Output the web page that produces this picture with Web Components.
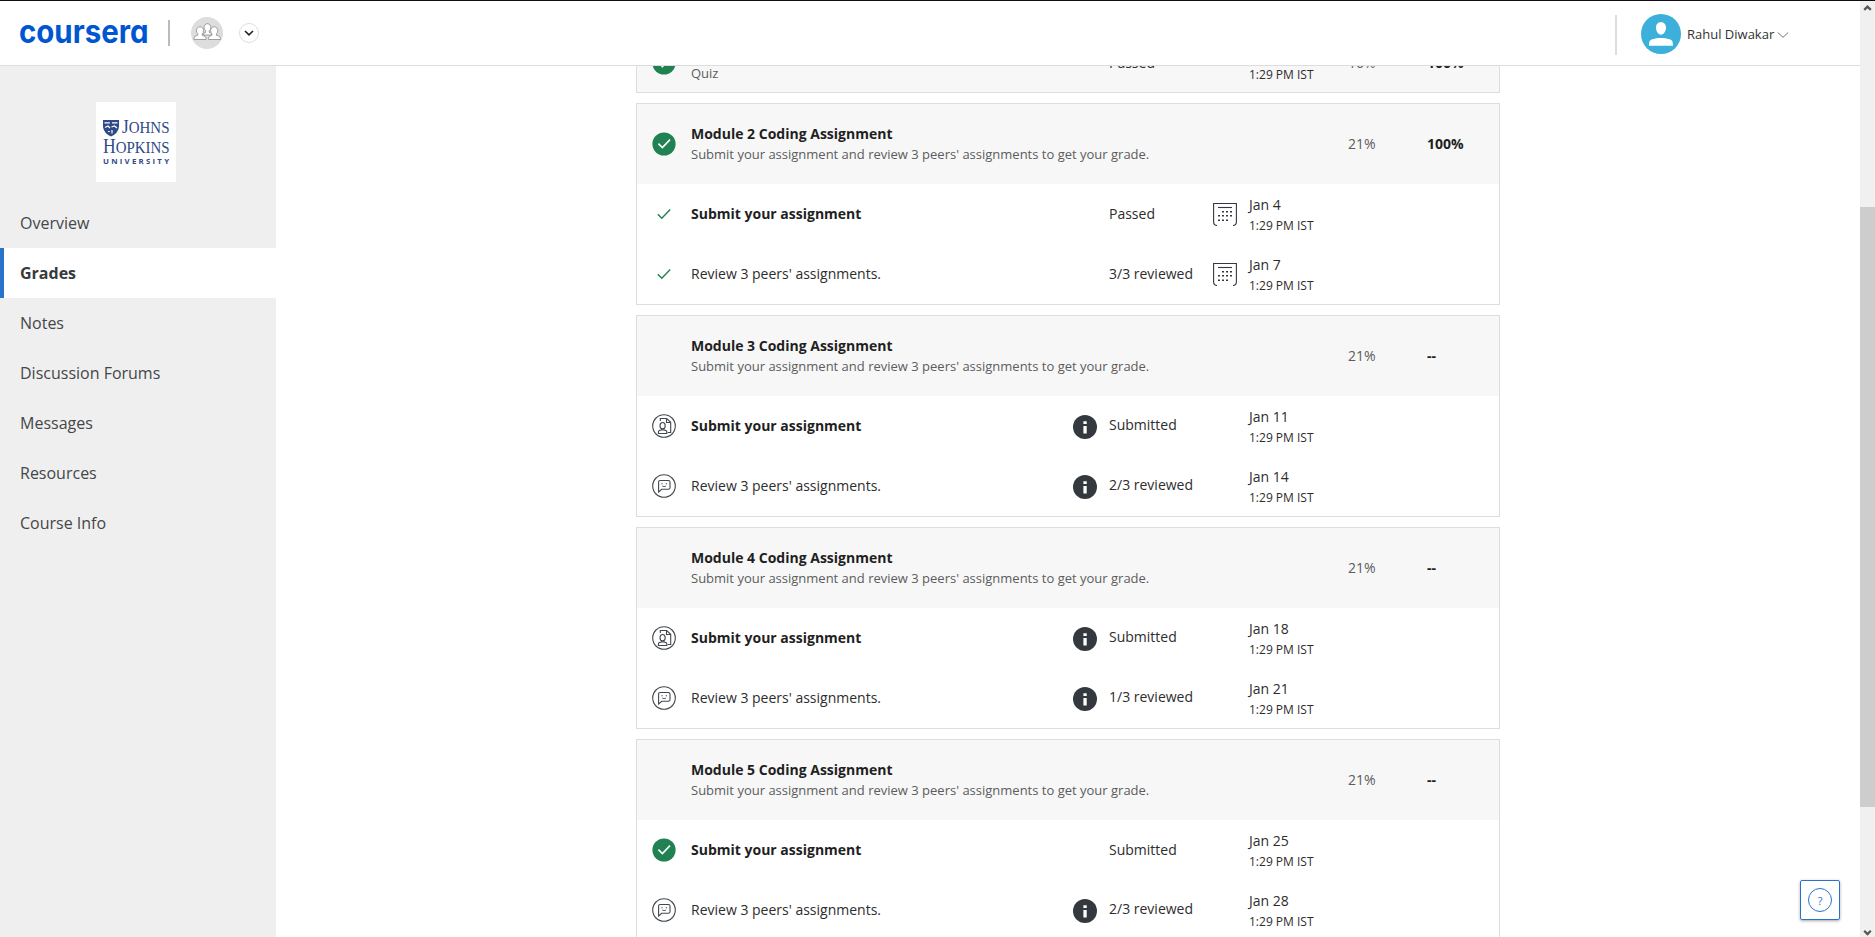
<!DOCTYPE html>
<html lang="en">
<head>
<meta charset="utf-8">
<title>Grades | Coursera</title>
<style>
html,body{margin:0;height:100%;overflow:hidden;background:#fff;font-family:"Open Sans",sans-serif;font-size:14px;color:#1f1f1f}
</style>
</head>
<body>
<course-app></course-app>
<script>
function define(name, css, html) {
  customElements.define(name, class extends HTMLElement {
    connectedCallback() {
      if (this.shadowRoot) return;
      const root = this.attachShadow({ mode: 'open' });
      const body = typeof html === 'function' ? html(this) : html;
      root.innerHTML = `<style>${css}</style>${body}`;
    }
  });
}

const ICONS = {
  done: `<circle cx="12" cy="12" r="11.6" fill="#208253"/><path d="M6.4 11.6l4 4 7.6-8" fill="none" stroke="#fff" stroke-width="1.6"/>`,
  check: `<path d="M5.800 12.200l4 4 8.400-8.800" fill="none" stroke="#208253" stroke-width="1.400"/>`,
  submit: `<g fill="none" stroke="#43484f" stroke-width="1.100"><circle cx="12" cy="12" r="11.300"/><path d="M8.300 7V4.500h6.400l4 3.800v10.200h-3M14.500 4.800v3.700h3.900"/><ellipse cx="10.600" cy="11.700" rx="2.600" ry="3.200"/><path d="M9.400 14.500v1.600M12 14.500v1.600M6.400 19.500v-1.600q0-1.700 3-1.900h2.400q3 .2 3 1.900v1.600z"/></g>`,
  review: `<g fill="none" stroke="#43484f" stroke-width="1.100"><circle cx="12" cy="12" r="11.300"/><path d="M6.600 18V8.100q0-1.600 1.600-1.600h8.200q1.600 0 1.600 1.600v5.600q0 1.600-1.600 1.600h-6.700z"/><path d="M10 9v1.400M14.300 9v1.400M10.300 12.100q1.900 1 3.700 0" stroke-width=".9"/></g>`,
  info: `<circle cx="12" cy="12" r="12" fill="#343940"/><path d="M10.400 6.300h3.300v2.600h-3.300zM10.400 10.900h3.300v7.500h-3.300z" fill="#fff"/>`,
  calendar: `<g fill="none" stroke="#343940" stroke-width="1.100"><path d="M4 23.500Q.6 23.300 .6 19.800V1.500h22.800v18.300q0 3.500-3.400 3.700"/><path d="M5 5.500h14"/></g><g fill="#343940"><path d="M9 9h2v1.600H9zM13 9h2v1.600h-2zM17 9h2v1.600h-2zM5 13h2v1.600H5zM9 13h2v1.600H9zM13 13h2v1.600h-2zM17 13h2v1.600h-2zM5 17.500h2v1.600H5zM9 17.500h2v1.600H9zM13 17.500h2v1.600h-2z"/></g>`
};

define('status-icon', `:host{display:block;width:24px;height:24px}svg{display:block}`,
  el => { const n = el.getAttribute('name'); return ICONS[n] ? `<svg width="24" height="24" viewBox="0 0 24 24">${ICONS[n]}</svg>` : ''; });

define('course-header', `
:host{display:flex;align-items:center;box-sizing:border-box;height:65px;border-bottom:1px solid #ddd;background:#fff;padding:0 71px 0 20px}
.logo{width:128px;height:40px;overflow:visible}
.rule{width:2px;background:#bbb;height:26px;margin-left:20px}
.org{margin-left:21px;width:32px;height:32px}
.drop{margin-left:16px}
.user{margin-left:auto;display:flex;align-items:center}
.urule{width:2px;height:40px;background:#ddd;margin-top:3px}
.avatar{margin:1px 0 0 24px}
.name{font-size:13px;margin:2px 0 0 6px;white-space:nowrap;width:85px;color:#333}
.chev{margin:3px 0 0 5px}
svg{display:block;flex:none}`,
`<svg class="logo" viewBox="0 0 128 40"><text x="-1" y="29.500" textLength="129.500" lengthAdjust="spacingAndGlyphs" font-family="Inter,sans-serif" font-size="32" font-weight="700" fill="#0056d2" style="font-feature-settings:'cv11'">coursera</text></svg>
<div class="rule"></div>
<svg class="org" viewBox="0 0 32 32"><circle cx="16" cy="16" r="16" fill="#ddd"/><g fill="#fff" stroke="#8a8a8a" stroke-width=".8"><path d="M12 18q0-2 2.700-2.600v-1.700a3.400 3.800 0 1 1 3.500 0v1.700q3.100.6 3.100 2.600z"/><path d="M3 22.500v-1.200q0-2.500 3.700-3v-1.600a3.600 3.900 0 1 1 4.600 0v1.600q3.700.5 3.700 3v1.200z"/><path d="M17.500 22.500v-1.200q0-2.500 3.400-3v-1.600a3.600 3.900 0 1 1 4.600 0v1.600q4 .5 4 3v1.200z"/></g></svg>
<svg class="drop" width="20" height="20" viewBox="0 0 20 20"><circle cx="10" cy="10" r="9.500" fill="#fff" stroke="#ddd"/><path d="M6 8l4 3.800L14 8" fill="none" stroke="#222" stroke-width="1.600"/></svg>
<div class="user"><div class="urule"></div>
<svg class="avatar" width="40" height="40" viewBox="0 0 40 40"><circle cx="20" cy="20" r="20" fill="#3cafda"/><path d="M20 8.300c3 0 5 2 5 5.200 0 3.800-2.400 7.200-5 7.200s-5-3.400-5-7.200c0-3.200 2-5.200 5-5.200zM8 31.700c0-4.500.8-5.700 3.500-6.500 3-.8 5.400-1.200 8.500-1.200s5.500.4 8.500 1.200c2.700.8 3.500 2 3.500 6.500z" fill="#fff"/></svg>
<span class="name">Rahul Diwakar</span>
<svg class="chev" width="12" height="8" viewBox="0 0 12 8"><path d="M.8 1.500L6 6.300l5.200-4.800" fill="none" stroke="#777" stroke-width="1"/></svg></div>`);

define('nav-item', `
:host{display:flex;align-items:center;box-sizing:border-box;height:50px;padding-left:20px;font-size:16px;color:#444749}
:host([active]){background:#fff;border-left:4px solid #2a73cc;padding-left:16px;font-weight:700;color:#373a3c}`, `<slot></slot>`);

define('university-logo', `:host{display:block;width:80px;height:80px;background:#fff}svg{display:block}`,
`<svg width="80" height="80" viewBox="0 0 80 80"><g fill="#2f4a86" font-family="Liberation Serif,serif">
<path d="M7 18h16v7q-1 6.500-8 9.500-7-3-8-9.500z"/><path d="M8.500 20.800h5.300M16 20.800h5.500M9 25.500l3-1.500 2 2M15.500 25l3-1 2.500 2M12 29.500h1.800M16 28v3.500" stroke="#fff" stroke-width="1.200" fill="none"/>
<text x="26" y="31" textLength="47.500" lengthAdjust="spacingAndGlyphs"><tspan font-size="19.500">J</tspan><tspan font-size="17">OHNS</tspan></text>
<text x="7" y="50.500" textLength="66.500" lengthAdjust="spacingAndGlyphs"><tspan font-size="20">H</tspan><tspan font-size="17">OPKINS</tspan></text>
<text x="7" y="62" textLength="66" font-family="Open Sans,sans-serif" font-size="7.800" font-weight="700">UNIVERSITY</text></g></svg>`);

define('course-nav', `:host{display:block;box-sizing:border-box;width:276px;background:#efefef;padding-top:36px}university-logo{margin:0 0 16px 96px}`,
`<university-logo></university-logo><nav><nav-item>Overview</nav-item><nav-item active>Grades</nav-item><nav-item>Notes</nav-item><nav-item>Discussion Forums</nav-item><nav-item>Messages</nav-item><nav-item>Resources</nav-item><nav-item>Course Info</nav-item></nav>`);

define('grade-row', `
:host{display:grid;grid-template-columns:39px 382px 36px 104px 36px 99px 79px 1fr;align-items:center;height:60px;padding-left:15px;box-sizing:border-box;white-space:nowrap;color:#2d2d2d}
:host([head]){height:80px;background:#f7f7f7}
:host([short]){height:58px}
.title,.status,.w,.g{padding-bottom:2px}
.status.up{padding-bottom:4px}
.t{line-height:21px}
.t.b,.g{font-weight:700;color:#1f1f1f}
.d{font-size:13px;line-height:20px;color:#5c5c5c}
.w{color:#5c5c5c}
.i2{margin-top:2px}
.date{line-height:21px;padding-top:2px}.time{font-size:12px;line-height:20px;padding-top:1px}`,
el => { const a = n => el.getAttribute(n) || ''; const info = el.hasAttribute('info'); return `
<status-icon name="${a('icon')}"></status-icon>
<div class="title"><div class="t ${el.hasAttribute('bold') ? 'b' : ''}"><slot></slot></div>${a('desc') ? `<div class="d">${a('desc')}</div>` : ''}</div>
<status-icon class="i2" name="${info ? 'info' : ''}"></status-icon>
<div class="status ${info ? 'up' : ''}">${a('status')}</div>
<status-icon name="${el.hasAttribute('cal') ? 'calendar' : ''}"></status-icon>
<div>${a('date') ? `<div class="date">${a('date')}</div><div class="time">1:29 PM IST</div>` : ''}</div>
<div class="w">${a('weight')}</div><div class="g">${a('grade')}</div>`; });

define('grade-card', `:host{display:block;flex:none;border:1px solid #ddd;background:#fff}`, `<slot></slot>`);

define('grade-list', `:host{display:flex;flex-direction:column;gap:10px;width:864px;margin:-33px 0 0 360px}`, () => {
  const D = "Submit your assignment and review 3 peers' assignments to get your grade.";
  const mod = (n, hi, grade, a, b) => `<grade-card><grade-row head bold icon="${hi}" desc="${D}" weight="21%" grade="${grade}">Module ${n} Coding Assignment</grade-row><grade-row bold ${a}>Submit your assignment</grade-row><grade-row ${b}>Review 3 peers' assignments.</grade-row></grade-card>`;
  return `<grade-card><grade-row head short bold icon="done" desc="Quiz" status="Passed" date="Jan 4" weight="16%" grade="100%">Module 2 Quiz</grade-row></grade-card>`
  + mod(2, 'done', '100%', 'icon="check" status="Passed" cal date="Jan 4"', 'icon="check" status="3/3 reviewed" cal date="Jan 7"')
  + mod(3, '', '--', 'icon="submit" info status="Submitted" date="Jan 11"', 'icon="review" info status="2/3 reviewed" date="Jan 14"')
  + mod(4, '', '--', 'icon="submit" info status="Submitted" date="Jan 18"', 'icon="review" info status="1/3 reviewed" date="Jan 21"')
  + mod(5, '', '--', 'icon="done" status="Submitted" date="Jan 25"', 'icon="review" info status="2/3 reviewed" date="Jan 28"');
});

define('help-button', `:host{display:block;position:absolute;right:35px;bottom:17px;box-sizing:border-box;width:40px;height:40px;background:#fff;border:1px solid #2a73cc;border-radius:2px;box-shadow:0 1px 3px rgba(0,0,0,.35)}
div{display:flex;align-items:center;justify-content:center;box-sizing:border-box;width:24px;height:24px;margin:7px;border:1px solid #2a73cc;border-radius:50%;color:#2a73cc;font-size:11px}`, `<div>?</div>`);

define('scroll-bar', `:host{display:flex;flex-direction:column;width:15px;background:#f0f0f0}
.thumb{height:600px;margin-top:189px;background:#cdcdcd}svg{display:block}.dn{margin-top:auto}`,
`<svg width="15" height="17" viewBox="0 0 15 17"><path d="M4.200 8.900l3.300-3.300 3.300 3.300" fill="none" stroke="#555" stroke-width="2.200"/></svg><div class="thumb"></div><svg class="dn" width="15" height="13" viewBox="0 0 15 13"><path d="M4.200 6.800l3.300 3.300 3.300-3.300" fill="none" stroke="#555" stroke-width="2.200"/></svg>`);

define('course-app', `
:host{display:flex;box-sizing:border-box;position:relative;width:1875px;height:937px;border-top:1px solid #120c18;overflow:hidden}
.page{flex:1;display:flex;flex-direction:column;min-width:0}
.body{flex:1;display:flex;min-height:0;overflow:hidden}
main{flex:1;overflow:hidden}`,
`<div class="page"><course-header></course-header><div class="body"><course-nav></course-nav><main><grade-list></grade-list></main></div></div><scroll-bar></scroll-bar><help-button></help-button>`);
</script>
</body>
</html>
